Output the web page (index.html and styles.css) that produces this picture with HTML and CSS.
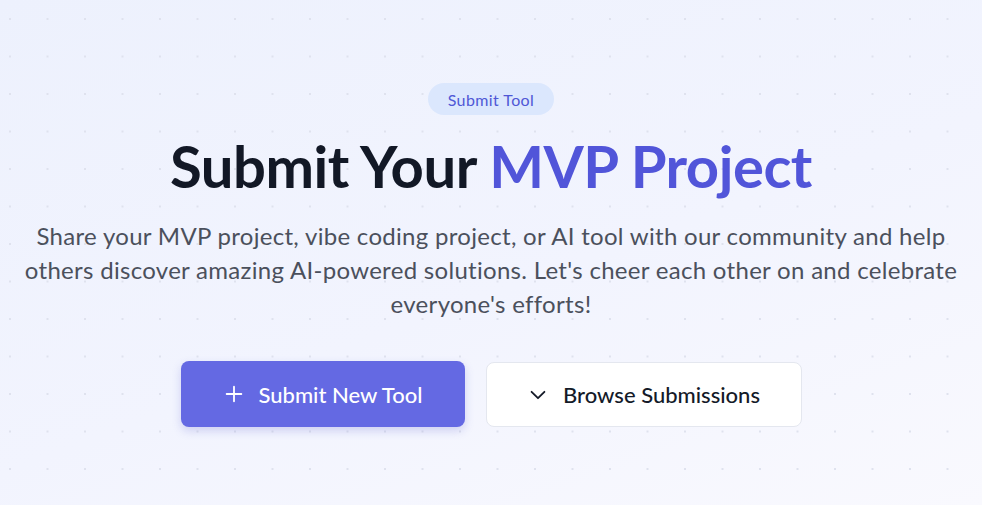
FILE: index.html
```html
<!DOCTYPE html>
<html lang="en">
<head>
  <meta charset="UTF-8">
  <meta name="viewport" content="width=device-width, initial-scale=1.0">
  <title>Submit Your MVP Project</title>
  <link rel="stylesheet" href="styles.css">
</head>
<body>

  <section class="hero">
    <span class="badge">Submit Tool</span>
    <h1 class="hero-title">Submit Your <span class="accent">MVP Project</span></h1>
    <p class="hero-text">
      Share your MVP project, vibe coding project, or AI tool with our community and help<br>
      others discover amazing AI-powered solutions. Let's cheer each other on and celebrate<br>
      everyone's efforts!
    </p>

    <div class="hero-actions">
      <a href="#submit" class="btn btn-primary">
        <svg class="btn-icon" viewBox="0 0 24 24" fill="none" stroke="currentColor" stroke-width="2" stroke-linecap="round" stroke-linejoin="round">
          <path d="M12 4v16M4 12h16"/>
        </svg>
        Submit New Tool
      </a>
      <a href="#browse" class="btn btn-secondary">
        <svg class="btn-icon" viewBox="0 0 24 24" fill="none" stroke="currentColor" stroke-width="2" stroke-linecap="round" stroke-linejoin="round">
          <path d="M5 8.5l7 7 7-7"/>
        </svg>
        Browse Submissions
      </a>
    </div>
  </section>

</body>
</html>
```

FILE: styles.css
```css
html, body {
  margin: 0;
  height: 100%;
}
body {
  font-family: Lato, "Noto Sans", sans-serif;
  background-color: #f3f5fe;
  background-image:
    radial-gradient(circle, #dfe2ee 1px, transparent 1.4px),
    linear-gradient(160deg, #edf1fd 0%, #f2f4fe 55%, #f9f9fe 100%);
  background-size: 37.5px 37.5px, 100% 100%;
  background-position: -8.75px 0.25px, 0 0;
  overflow: hidden;
}
.hero {
  display: flex;
  flex-direction: column;
  align-items: center;
  padding-top: 83px;
  text-align: center;
}
.badge {
  display: inline-flex;
  align-items: center;
  height: 32px;
  padding: 0 20px;
  border-radius: 16px;
  background: #dbe7fd;
  color: #4f57d6;
  font-size: 16px;
  letter-spacing: 0.4px;
}
.hero-title {
  margin: 18px 0 0;
  font-size: 58px;
  line-height: 66px;
  font-weight: 700;
  color: #121826;
  letter-spacing: -0.5px;
}
.accent {
  color: #5155d9;
}
.hero-text {
  margin: 20px 0 0;
  font-size: 24px;
  line-height: 34px;
  letter-spacing: 0.3px;
  color: #4b505c;
}
.hero-actions {
  display: flex;
  gap: 21px;
  margin-top: 40px;
}
.btn {
  display: inline-flex;
  align-items: center;
  justify-content: center;
  gap: 14px;
  height: 66px;
  border-radius: 8px;
  font-size: 22px;
  font-weight: 500;
  text-decoration: none;
  box-sizing: border-box;
}
.btn-icon {
  width: 22px;
  height: 22px;
}
.btn-primary {
  width: 284px;
  background: #6469e3;
  color: #fff;
  box-shadow: 0 4px 10px rgba(79, 84, 200, 0.22);
}
.btn-secondary {
  width: 316px;
  height: 65px;
  margin-top: 1px;
  background: #fff;
  color: #141a28;
  border: 1px solid #e4e7ef;
}
```
